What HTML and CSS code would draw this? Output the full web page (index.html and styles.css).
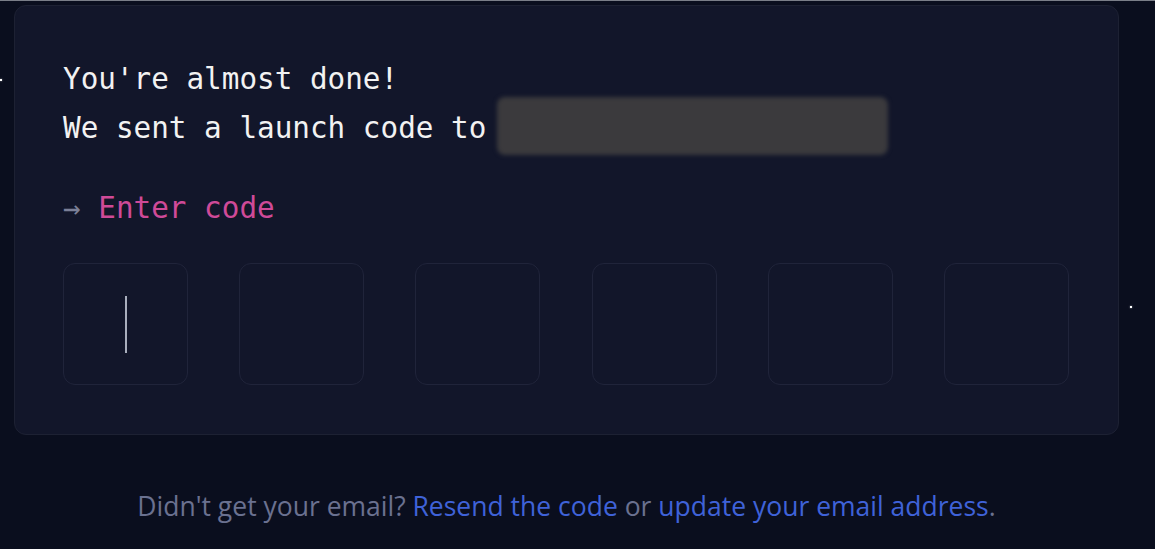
FILE: index.html
```html
<!DOCTYPE html>
<html lang="en">
<head>
<meta charset="utf-8">
<title>Enter code</title>
<link rel="stylesheet" href="styles.css">
</head>
<body>
<div class="page">
  <span class="star star-a"></span>
  <span class="star star-b"></span>
  <main class="card">
    <p class="line">You're almost done!</p>
    <p class="line">We sent a launch code to <span class="redacted"></span></p>
    <p class="prompt"><span class="arrow">→</span> <span class="label">Enter code</span></p>
    <div class="code-grid">
      <div class="code-box active"><span class="cursor"></span></div>
      <div class="code-box"></div>
      <div class="code-box"></div>
      <div class="code-box"></div>
      <div class="code-box"></div>
      <div class="code-box"></div>
    </div>
  </main>
  <p class="footer">Didn't get your email? <a href="#">Resend the code</a> or <a href="#">update your email address</a>.</p>
</div>
</body>
</html>
```

FILE: styles.css
```css
* { box-sizing: border-box; }
html, body { margin: 0; padding: 0; }
body {
  background: #0a0e1e;
  border-top: 1px solid #7a7e88;
  height: 549px;
  overflow: hidden;
}
.page {
  position: relative;
  padding: 4px 0 0 14px;
}
.star {
  position: absolute;
  width: 2px;
  height: 2px;
  background: #ffffff;
  box-shadow: 0 0 2px rgba(255,255,255,0.6);
}
.star-a { left: 0; top: 78px; }
.star-b { left: 1130px; top: 305px; }
.card {
  width: 1105px;
  background: #12162a;
  border: 1px solid #1d2133;
  border-radius: 12px;
  padding: 49px 48px 49px 48px;
  font-family: "DejaVu Sans Mono", monospace;
  font-size: 29.3px;
  color: #f2f2f2;
}
.line {
  margin: 0;
  line-height: 49px;
  height: 49px;
  white-space: nowrap;
}
.redacted {
  display: inline-block;
  vertical-align: middle;
  width: 391px;
  height: 58px;
  margin: -12px 0 -12px -7px;
  background: #3b3a3d;
  border-radius: 8px;
  filter: blur(2px);
  position: relative;
  top: -4px;
}
.prompt {
  margin: 35px 0 0 0;
  line-height: 40px;
}
.arrow { color: #7b8098; }
.label { color: #cf4a98; }
.code-grid {
  display: grid;
  grid-template-columns: repeat(6, 125px);
  column-gap: 51.2px;
  margin-top: 35px;
}
.code-box {
  height: 122px;
  border: 1px solid #20243a;
  border-radius: 12px;
  background: #12162a;
  display: flex;
  align-items: center;
  justify-content: center;
}
.cursor {
  display: block;
  width: 2px;
  height: 57px;
  background: #a9aebd;
}
.footer {
  width: 1105px;
  text-align: center;
  margin: 53px 0 0 0;
  font-family: "Open Sans", sans-serif;
  font-size: 26.5px;
  line-height: 36px;
  color: #6a7190;
}
.footer a {
  color: #3f62d8;
  text-decoration: none;
}
```
